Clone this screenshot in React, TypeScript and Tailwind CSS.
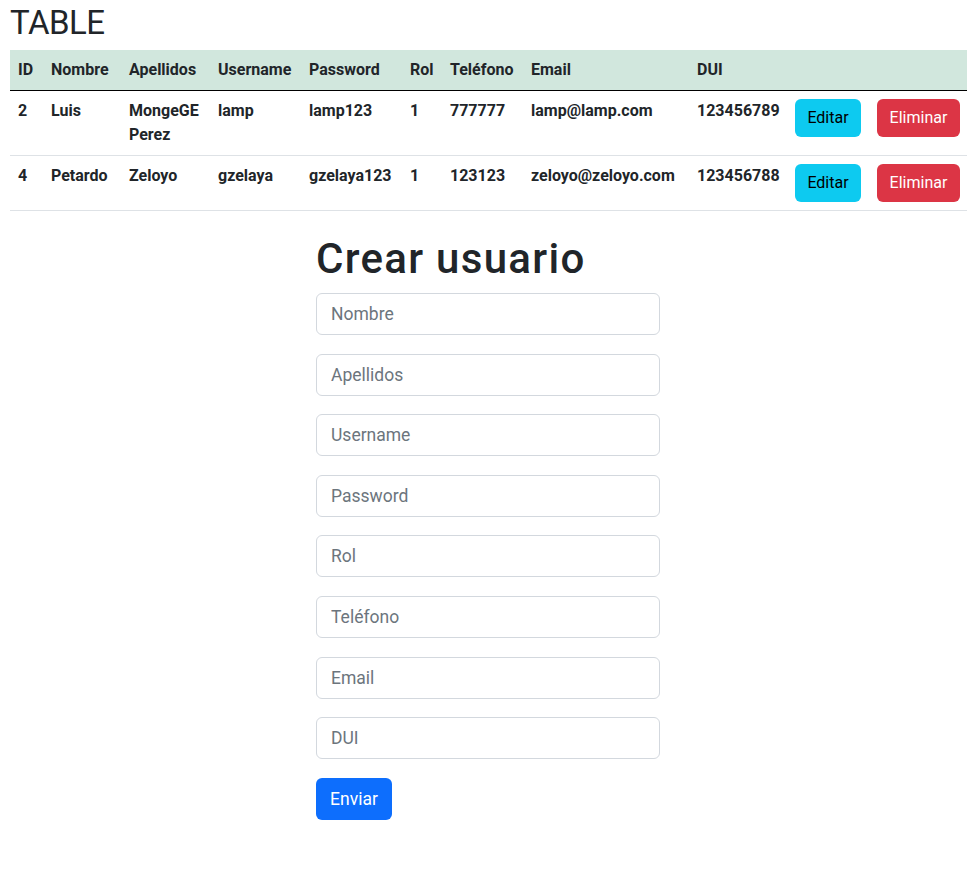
import React from 'react';

const users = [
  { id: 2, nombre: 'Luis', apellidos: 'MongeGE Perez', username: 'lamp', password: 'lamp123', rol: 1, telefono: '777777', email: 'lamp@lamp.com', dui: '123456789' },
  { id: 4, nombre: 'Petardo', apellidos: 'Zeloyo', username: 'gzelaya', password: 'gzelaya123', rol: 1, telefono: '123123', email: 'zeloyo@zeloyo.com', dui: '123456788' },
];

const fields = ['Nombre', 'Apellidos', 'Username', 'Password', 'Rol', 'Teléfono', 'Email', 'DUI'];

export default function App() {
  return (
    <div className="min-h-[894px] bg-white text-[#212529] px-[10px] pt-[4px] font-['Segoe_UI','Roboto',sans-serif]">
      <h2 className="text-[33px] leading-[38px] font-normal tracking-[-0.5px] mb-[8px]">TABLE</h2>

      <table className="w-[957px] table-fixed border-collapse text-[16px] leading-[24px] mb-[16px]">
        <colgroup>
          <col className="w-[33px]" />
          <col className="w-[78px]" />
          <col className="w-[89px]" />
          <col className="w-[91px]" />
          <col className="w-[101px]" />
          <col className="w-[40px]" />
          <col className="w-[81px]" />
          <col className="w-[166px]" />
          <col className="w-[98px]" />
          <col className="w-[82px]" />
          <col className="w-[98px]" />
        </colgroup>
        <thead>
          <tr className="bg-[#d1e7dd] border-b border-black">
            {['ID', 'Nombre', 'Apellidos', 'Username', 'Password', 'Rol', 'Teléfono', 'Email', 'DUI', '', ''].map((h, i) => (
              <th key={i} className="p-2 text-left font-bold">{h}</th>
            ))}
          </tr>
        </thead>
        <tbody>
          {users.map(u => (
            <tr key={u.id} className="border-b border-[#dee2e6] align-top font-bold">
              <td className="p-2">{u.id}</td>
              <td className="p-2">{u.nombre}</td>
              <td className="p-2">{u.apellidos}</td>
              <td className="p-2">{u.username}</td>
              <td className="p-2">{u.password}</td>
              <td className="p-2">{u.rol}</td>
              <td className="p-2">{u.telefono}</td>
              <td className="p-2 whitespace-nowrap">{u.email}</td>
              <td className="p-2">{u.dui}</td>
              <td className="p-2">
                <button className="h-[38px] w-[66px] rounded-[6px] bg-[#0dcaf0] text-black font-normal">Editar</button>
              </td>
              <td className="p-2">
                <button className="h-[38px] w-[83px] rounded-[6px] bg-[#dc3545] text-white font-normal">Eliminar</button>
              </td>
            </tr>
          ))}
        </tbody>
      </table>

      <div className="w-[344px] mx-auto pt-[8px]">
        <h1 className="text-[42px] leading-[48px] font-medium tracking-[1.3px] mb-[10px]">Crear usuario</h1>
        <form className="flex flex-col">
          {fields.map(f => (
            <input
              key={f}
              placeholder={f}
              className="h-[42px] mb-[18.6px] px-[14px] text-[17.5px] border border-[#d3d8de] rounded-[6px] placeholder:text-[#6c757d] outline-none"
            />
          ))}
          <button type="button" className="self-start h-[42px] w-[76px] rounded-[6px] bg-[#0d6efd] text-white text-[17.5px]">Enviar</button>
        </form>
      </div>
    </div>
  );
}
